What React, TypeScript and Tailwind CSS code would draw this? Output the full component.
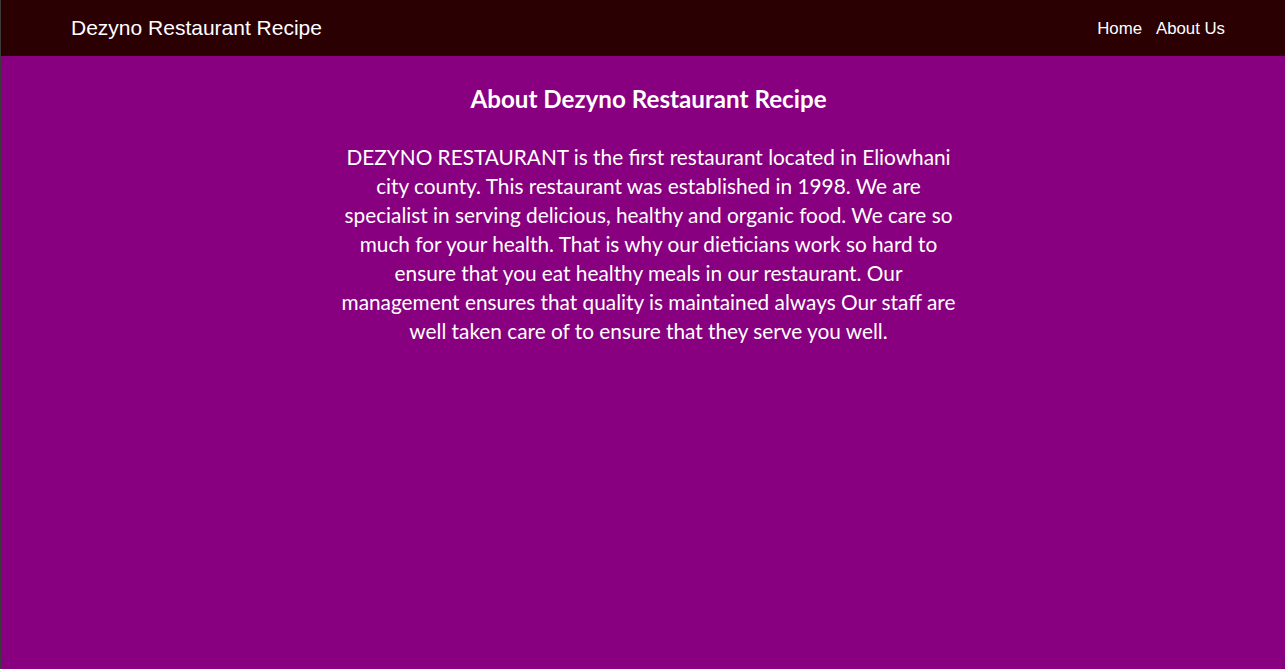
export default function App() {
  return (
    <div className="min-h-[669px] border-l border-[#3a3a3a] bg-[#880080] font-['Lato',sans-serif] text-white">
      <header className="flex h-14 items-center justify-between bg-[#2a0003] pl-[70px] pr-[60px] font-['Liberation_Sans',Arial,sans-serif]">
        <span className="text-[21px]">Dezyno Restaurant Recipe</span>
        <nav className="flex gap-[14px] pt-[2px] text-[16.8px]">
          <a href="#">Home</a>
          <a href="#">About Us</a>
        </nav>
      </header>
      <main className="flex flex-col items-center pl-[11px] pt-[27px]">
        <h1 className="text-[24.2px] font-bold leading-[32px]">About Dezyno Restaurant Recipe</h1>
        <p className="mt-[27px] w-[630px] text-center text-[20.8px] leading-[29px]">
          DEZYNO RESTAURANT is the first restaurant located in Eliowhani city county. This restaurant was established in 1998. We are specialist in serving delicious, healthy and organic food. We care so much for your health. That is why our dieticians work so hard to ensure that you eat healthy meals in our restaurant. Our management ensures that quality is maintained always Our staff are well taken care of to ensure that they serve you well.
        </p>
      </main>
    </div>
  )
}
